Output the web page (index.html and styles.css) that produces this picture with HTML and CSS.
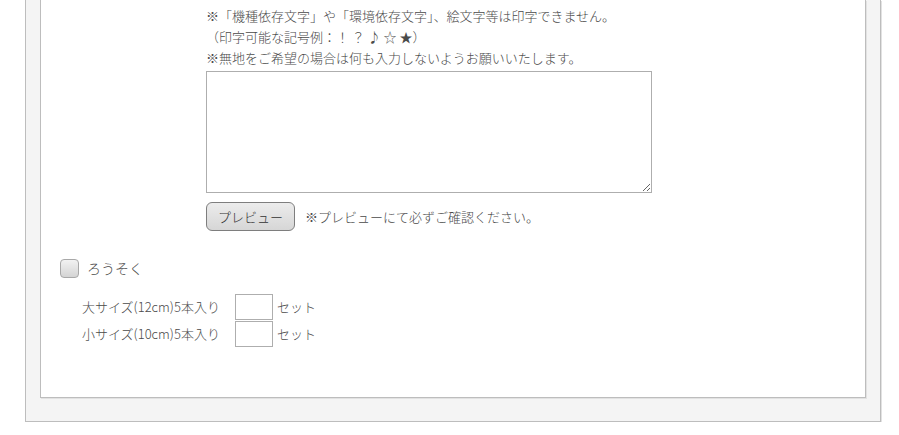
FILE: index.html
```html
<!DOCTYPE html>
<html lang="ja">
<head>
    <meta charset="UTF-8">
    <meta name="viewport" content="width=device-width, initial-scale=1.0">
    <title>名入れ・ろうそく</title>
    <link rel="stylesheet" href="styles.css">
</head>
<body>
    <div class="panel">
        <div class="box">
            <div class="message-area">
                <p class="note">※「機種依存文字」や「環境依存文字」、絵文字等は印字できません。</p>
                <p class="note">（印字可能な記号例：！ ？ ♪ ☆ ★）</p>
                <p class="note">※無地をご希望の場合は何も入力しないようお願いいたします。</p>
                <textarea class="message-input"></textarea>
                <div class="preview-row">
                    <button type="button" class="preview-btn">プレビュー</button>
                    <span class="preview-note">※プレビューにて必ずご確認ください。</span>
                </div>
            </div>

            <div class="candle">
                <label class="candle-check">
                    <input type="checkbox" class="check">
                    <span>ろうそく</span>
                </label>
                <div class="candle-row">
                    <span class="candle-name">大サイズ(12cm)5本入り</span>
                    <input type="text" class="qty">
                    <span class="unit">セット</span>
                </div>
                <div class="candle-row">
                    <span class="candle-name">小サイズ(10cm)5本入り</span>
                    <input type="text" class="qty">
                    <span class="unit">セット</span>
                </div>
            </div>
        </div>
    </div>
</body>
</html>
```

FILE: styles.css
```css
* {
    margin: 0;
    padding: 0;
    box-sizing: border-box;
}

body {
    background: #fff;
    font-family: "Noto Sans CJK JP", "Noto Sans", sans-serif;
    font-size: 13px;
    font-weight: 300;
    color: #4a4a4a;
}

.panel {
    margin-left: 25px;
    width: 856px;
    background: #f4f4f4;
    border: 1px solid #bdbdbd;
    border-top: none;
    box-shadow: 1px 1px 0 #e2e2e2;
    padding: 0 14px 23px;
}

.box {
    background: #fff;
    border: 1px solid #bdbdbd;
    border-top: none;
    box-shadow: 1px 1px 0 #e2e2e2;
    padding: 5px 0 50px 19px;
}

.message-area {
    margin-left: 146px;
}

.note {
    line-height: 21px;
    white-space: nowrap;
}

.message-input {
    display: block;
    margin-top: 3px;
    width: 446px;
    height: 122px;
    border: 1px solid #aeaeae;
    resize: both;
    font-family: inherit;
}

.preview-row {
    display: flex;
    align-items: center;
    gap: 10px;
    margin-top: 9px;
}

.preview-btn {
    width: 89px;
    height: 29px;
    border: 1px solid #7e7e7e;
    border-radius: 6px;
    background: linear-gradient(#ececec, #d6d6d6);
    font-family: inherit;
    font-size: 13px;
    font-weight: 300;
    color: #333;
}

.candle {
    margin-top: 27px;
}

.candle-check {
    display: flex;
    align-items: center;
    gap: 8px;
    font-size: 14px;
    margin-bottom: 15px;
}

.check {
    appearance: none;
    width: 19px;
    height: 19px;
    border: 1px solid #a8a8a8;
    border-radius: 4px;
    background: linear-gradient(#f2f2f2, #d4d4d4);
}

.candle-row {
    display: flex;
    align-items: center;
    gap: 4px;
    margin-left: 22px;
    height: 27px;
}

.candle-name {
    width: 149px;
    white-space: nowrap;
}

.qty {
    width: 38px;
    height: 26px;
    border: 1px solid #aeaeae;
}
```
